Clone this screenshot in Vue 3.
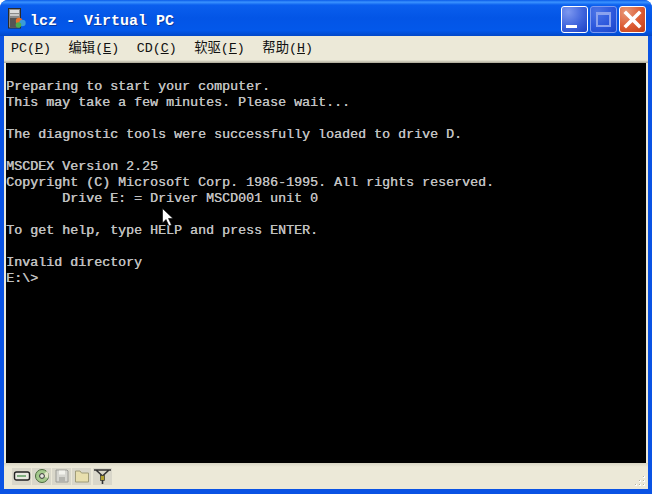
<script setup>
const menus = [
  { label: 'PC(', key: 'P' },
  { label: '编辑(', key: 'E' },
  { label: 'CD(', key: 'C' },
  { label: '软驱(', key: 'F' },
  { label: '帮助(', key: 'H' }
]
const lines = [
  'Preparing to start your computer.',
  'This may take a few minutes. Please wait...',
  '',
  'The diagnostic tools were successfully loaded to drive D.',
  '',
  'MSCDEX Version 2.25',
  'Copyright (C) Microsoft Corp. 1986-1995. All rights reserved.',
  '       Drive E: = Driver MSCD001 unit 0',
  '',
  'To get help, type HELP and press ENTER.',
  '',
  'Invalid directory',
  'E:\\>'
]
</script>

<template>
  <div class="window">
    <header class="titlebar">
      <svg class="appicon" width="18" height="21" viewBox="0 0 18 21">
        <rect x="0.5" y="0.5" width="12" height="19.5" fill="#8a8a8a" stroke="#2a2a2a" />
        <rect x="2" y="2" width="9" height="3" fill="#dcdcdc" />
        <rect x="2" y="6" width="9" height="2" fill="#c8c8c8" />
        <rect x="2" y="10" width="9" height="9" fill="#555" />
        <circle cx="11" cy="13" r="3.2" fill="#e6702a" />
        <circle cx="14.5" cy="15" r="3.2" fill="#3a9bd8" />
        <circle cx="10.5" cy="17" r="2.8" fill="#4cae4c" />
      </svg>
      <span class="title">lcz - Virtual PC</span>
      <div class="controls">
        <div class="btn min"><i></i></div>
        <div class="btn max"><i></i></div>
        <div class="btn close">
          <svg width="25" height="25" viewBox="0 0 25 25">
            <path d="M6 6 L19 19 M19 6 L6 19" stroke="#fff" stroke-width="3.6" stroke-linecap="square" />
          </svg>
        </div>
      </div>
    </header>
    <div class="body">
      <nav class="menubar">
        <span v-for="m in menus" :key="m.key" class="menu">{{ m.label }}<u>{{ m.key }}</u>)</span>
      </nav>
      <div class="rule"></div>
      <main class="screen">
        <div v-for="(l, i) in lines" :key="i" class="line">{{ l }}</div>
        <svg class="cursor" width="12" height="20" viewBox="0 0 12 20">
          <path d="M0.5 0.5 V15 L4 11.5 L7 18 L9.5 17 L6.5 10.5 H11 Z" fill="#fff" stroke="#000" stroke-width="0.6" />
        </svg>
      </main>
      <footer class="statusbar">
        <div class="tray">
          <div class="ticon">
            <svg width="18" height="16" viewBox="0 0 18 16">
              <rect x="1.5" y="4" width="15" height="8" rx="2" fill="#e8e8e0" stroke="#222" stroke-width="1.4" />
              <rect x="4" y="7" width="9" height="2" fill="#7fae7f" />
            </svg>
          </div>
          <div class="ticon">
            <svg width="16" height="16" viewBox="0 0 16 16">
              <circle cx="8" cy="8" r="6.5" fill="#a4c98c" stroke="#4a6a3c" />
              <path d="M8 8 L13 3 A7 7 0 0 1 14 10 Z" fill="#e2e6c8" />
              <circle cx="8" cy="8" r="2.4" fill="#e8e8e0" stroke="#333" />
            </svg>
          </div>
          <div class="ticon">
            <svg width="16" height="16" viewBox="0 0 16 16">
              <path d="M2 2 H13 L14 3 V14 H2 Z" fill="#d6d6d0" stroke="#9c9c96" />
              <rect x="5" y="2.5" width="6" height="4" fill="#f2f2ec" />
              <rect x="5" y="9" width="6" height="5" fill="#b4b4ae" />
            </svg>
          </div>
          <div class="ticon">
            <svg width="16" height="16" viewBox="0 0 16 16">
              <path d="M1.5 3 H6 L7.5 5 H14.5 V14 H1.5 Z" fill="#e8dfae" stroke="#a09c78" />
            </svg>
          </div>
          <div class="ticon last">
            <svg width="19" height="16" viewBox="0 0 19 16">
              <path d="M1 2 H18 M3 2 L9.5 8 M16 2 L9.5 8" stroke="#333" stroke-width="1.6" fill="none" />
              <rect x="7.5" y="7.5" width="4" height="5" fill="#b0a030" stroke="#333" stroke-width="0.7" />
              <path d="M9.5 12 V16" stroke="#333" stroke-width="1.6" />
            </svg>
          </div>
        </div>
        <svg class="grip" width="12" height="12" viewBox="0 0 12 12">
          <g fill="#fff">
            <rect x="9" y="1" width="2" height="2" /><rect x="5" y="5" width="2" height="2" /><rect x="9" y="5" width="2" height="2" />
            <rect x="1" y="9" width="2" height="2" /><rect x="5" y="9" width="2" height="2" /><rect x="9" y="9" width="2" height="2" />
          </g>
          <g fill="#b5b2a0">
            <rect x="9" y="1" width="1" height="1" /><rect x="5" y="5" width="1" height="1" /><rect x="9" y="5" width="1" height="1" />
            <rect x="1" y="9" width="1" height="1" /><rect x="5" y="9" width="1" height="1" /><rect x="9" y="9" width="1" height="1" />
          </g>
        </svg>
      </footer>
    </div>
  </div>
</template>

<style>
html, body { margin: 0; background: #fff; }
</style>

<style scoped>
.window {
  width: 652px;
  height: 494px;
  display: flex;
  flex-direction: column;
  overflow: hidden;
  background: #0a53e4;
  border-radius: 8px 8px 0 0;
}
.titlebar {
  height: 36px;
  flex: none;
  display: flex;
  align-items: center;
  padding: 0 6px 0 8px;
  background: linear-gradient(180deg, #0a5be8 0%, #3a93ff 6%, #0a5fee 14%, #0355e6 50%, #0358ea 85%, #0248c8 100%);
}
.appicon { flex: none; margin-right: 4px; margin-bottom: 0; }
.title {
  font: bold 15px "Liberation Mono", monospace;
  color: #fff;
  text-shadow: 1px 1px 0 #0a3aa0;
  margin-top: 6px;
}
.controls { margin-left: auto; display: flex; gap: 2px; margin-top: 3px; }
.btn {
  width: 27px;
  height: 27px;
  box-sizing: border-box;
  border: 1px solid #fff;
  border-radius: 3px;
  display: flex;
  align-items: center;
  justify-content: center;
  position: relative;
}
.min { background: radial-gradient(circle at 25% 20%, #7d98f0 0%, #3f64dc 55%, #1b3fc4 100%); }
.min i { position: absolute; left: 4px; bottom: 4px; width: 11px; height: 3px; background: #fff; }
.max { background: radial-gradient(circle at 25% 20%, #4c74e6 0%, #2a56dc 60%, #1a44c8 100%); border-color: #7d9af0; }
.max i { width: 15px; height: 15px; box-sizing: border-box; border: 2px solid #8ba2ee; border-top-width: 3px; }
.close { background: radial-gradient(circle at 25% 20%, #e89878 0%, #dc5c34 55%, #c03c14 100%); }
.body {
  flex: 1;
  min-height: 0;
  margin: 0 4px 5px;
  display: flex;
  flex-direction: column;
  background: #ece9d8;
}
.menubar {
  height: 24px;
  flex: none;
  display: flex;
  align-items: center;
  gap: 17.5px;
  padding: 1px 0 0 7px;
  box-sizing: border-box;
  font: 13.33px/16px "Liberation Mono", "Noto Sans CJK SC", monospace;
  color: #111;
}
.menu { white-space: pre; }
.rule { height: 3px; flex: none; background: linear-gradient(180deg, #ece9d8, #a9a696); }
.screen {
  width: 640px;
  height: 400px;
  flex: none;
  margin-left: 2px;
  box-sizing: border-box;
  padding-top: 16px;
  background: #000;
  position: relative;
  font: 13.33px/16px "Liberation Mono", monospace;
  color: #c0c0c0;
  text-shadow: 0.4px 0 0 #c0c0c0;
}
.line { height: 16px; white-space: pre; }
.cursor { position: absolute; left: 156px; top: 145px; }
.statusbar {
  flex: 1;
  min-height: 0;
  display: flex;
  align-items: center;
  justify-content: space-between;
  padding: 0 2px 0 8px;
  background: linear-gradient(180deg, #d8d5c4 0, #ece9d8 4px);
}
.tray {
  display: flex;
  gap: 1px;
}
.ticon {
  width: 19px;
  height: 17px;
  display: flex;
  align-items: center;
  justify-content: center;
  background: #d9d7ca;
}
.last { margin-left: 1px; }
.grip { align-self: flex-end; margin-bottom: 2px; }
</style>
